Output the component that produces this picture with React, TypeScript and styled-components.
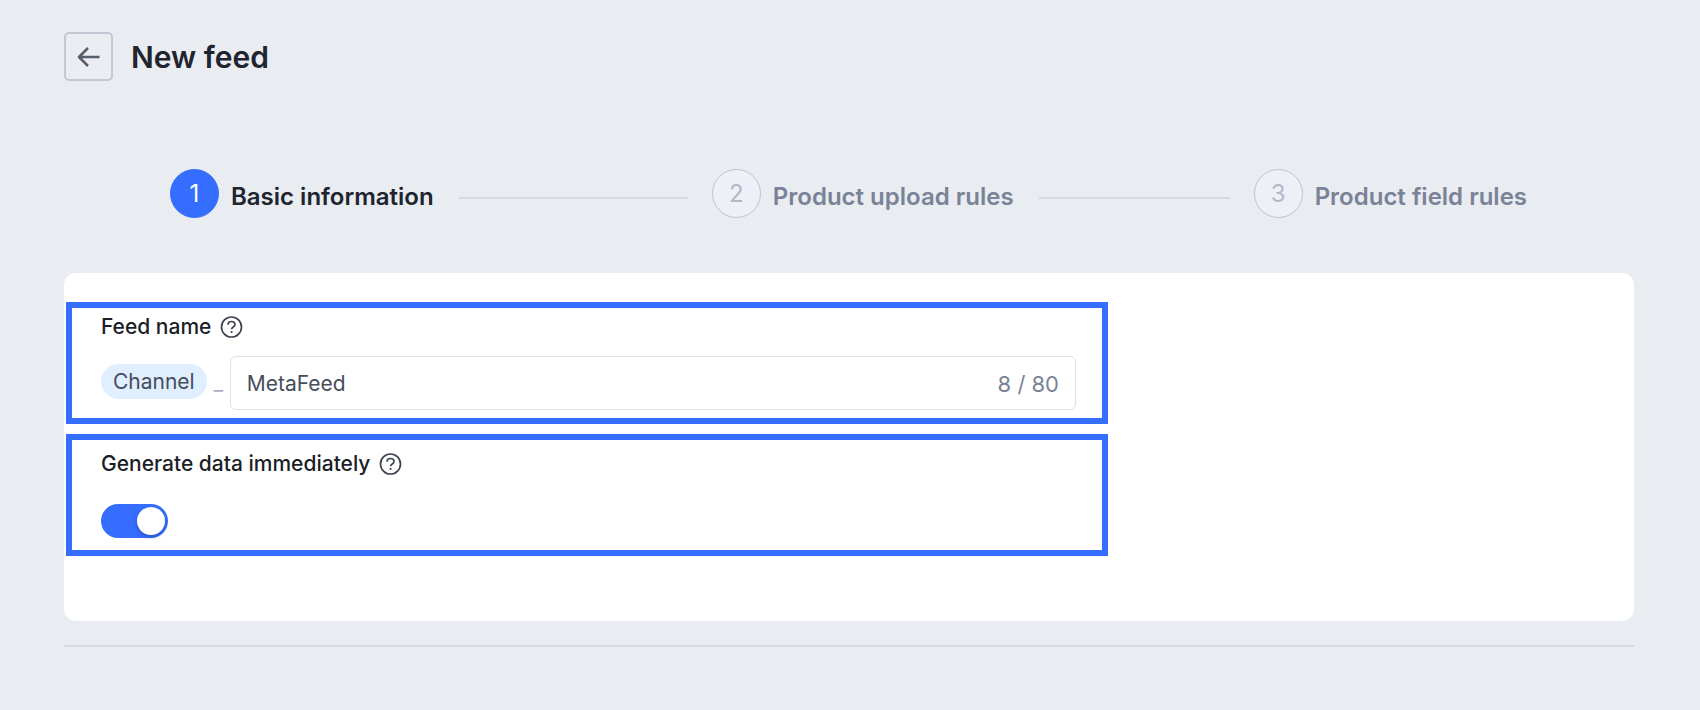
import React, { useState } from "react";
import styled, { createGlobalStyle } from "styled-components";

const GlobalStyle = createGlobalStyle`
  * { box-sizing: border-box; }
  body {
    margin: 0;
    background: #e9ecf1;
    color: #20242f;
    font-family: Inter, "Liberation Sans", sans-serif;
  }
  button, input { font: inherit; color: inherit; }
`;

const Page = styled.main`
  padding: 32px 66px 32px 64px;
`;

const Header = styled.header`
  display: flex;
  align-items: center;
  gap: 18px;
`;

const BackButton = styled.button`
  display: flex;
  align-items: center;
  justify-content: center;
  width: 49px;
  height: 49px;
  padding: 0;
  border: 2px solid #c5c8d4;
  border-radius: 5px;
  background: #ebedf2;
  color: #565d6b;
  cursor: pointer;
`;

const Title = styled.h1`
  margin: 0;
  font-size: 30px;
  line-height: 36px;
  font-weight: 600;
`;

const Steps = styled.ol`
  display: flex;
  margin: 88px 0 55px;
  padding: 0 107px 0 106px;
  list-style: none;
`;

const Step = styled.li`
  display: flex;
  flex: 1;
  align-items: center;
  &:last-child { flex: none; }
`;

const StepNumber = styled.span<{ $active?: boolean }>`
  display: flex;
  flex: none;
  align-items: center;
  justify-content: center;
  width: 49px;
  height: 49px;
  border: 1px solid ${(p) => (p.$active ? "#356eff" : "#bfc3cf")};
  border-radius: 50%;
  background: ${(p) => (p.$active ? "#356eff" : "#eef0f7")};
  color: ${(p) => (p.$active ? "#fff" : "#b3b8c8")};
  font-size: 24px;
  line-height: 28px;
`;

const StepLabel = styled.span<{ $active?: boolean }>`
  padding: 6px 0 0 12px;
  color: ${(p) => (p.$active ? "#20242f" : "#7a8297")};
  font-size: 24px;
  line-height: 28px;
  font-weight: 600;
  white-space: nowrap;
`;

const StepLine = styled.span`
  flex: 1;
  height: 2px;
  margin: 8px 24px 0 25px;
  background: #d5d9e4;
`;

const Card = styled.form`
  display: flex;
  flex-direction: column;
  gap: 10px;
  padding: 29px 2px 65px;
  border-radius: 12px;
  background: #fff;
`;

const Field = styled.div<{ $roomy?: boolean }>`
  width: 100%;
  max-width: 1042px;
  height: 122px;
  padding: ${(p) => (p.$roomy ? 11 : 6)}px 26px 0 29px;
  border: 6px solid #356eff;
`;

const LabelRow = styled.div`
  display: flex;
  align-items: center;
  gap: 9px;
  height: 26px;
`;

const Label = styled.label`
  color: #1b1e27;
  font-size: 21px;
  line-height: 26px;
  font-weight: 500;
`;

const HelpButton = styled.button`
  display: flex;
  padding: 0;
  border: 0;
  background: none;
  color: #3e4350;
`;

const NameRow = styled.div`
  display: flex;
  align-items: center;
  margin-top: 16px;
`;

const Chip = styled.span`
  margin-bottom: 3px;
  padding: 0 12px;
  border-radius: 18px;
  background: #e0efff;
  color: #464d5c;
  font-size: 21px;
  line-height: 35px;
`;

const Separator = styled.span`
  width: 23px;
  color: #a9aebb;
  font-size: 21px;
  line-height: 26px;
  text-align: center;
`;

const InputBox = styled.div`
  display: flex;
  flex: 1;
  align-items: center;
  height: 54px;
  padding: 2px 16px 0;
  border: 1px solid #dfe1e8;
  border-radius: 6px;
  background: #fff;
`;

const TextInput = styled.input`
  flex: 1;
  min-width: 0;
  padding: 0;
  border: 0;
  outline: 0;
  background: none;
  color: #464d5c;
  font-size: 21px;
  line-height: 26px;
`;

const Counter = styled.span`
  color: #7a8297;
  font-size: 22px;
  line-height: 26px;
`;

const Switch = styled.input`
  display: flex;
  align-items: center;
  appearance: none;
  width: 67px;
  height: 34px;
  margin: 27px 0 0;
  padding: 0 3px;
  border-radius: 17px;
  background: #b3b8c8;
  cursor: pointer;
  &::before {
    content: "";
    width: 28px;
    height: 28px;
    border-radius: 50%;
    background: #fff;
    box-shadow: 0 2px 4px rgba(0, 20, 90, 0.3);
  }
  &:checked {
    justify-content: flex-end;
    background: #356eff;
  }
`;

const Divider = styled.hr`
  height: 2px;
  margin: 24px 0 0;
  border: 0;
  background: #d5d9e1;
`;

const ArrowIcon = () => (
  <svg width="24" height="22" viewBox="0 0 24 22" fill="none" stroke="currentColor" strokeWidth="2.6" strokeLinejoin="round" aria-hidden="true">
    <path d="M22.5 11H2.5M11 2L2 11l9 9" />
  </svg>
);

const Help = ({ about }: { about: string }) => (
  <HelpButton type="button" aria-label={about}>
    <svg width="24" height="24" viewBox="0 0 24 24" fill="none" stroke="currentColor" strokeWidth="1.7" aria-hidden="true">
      <circle cx="11.5" cy="12" r="10" />
      <path d="M8 9.8C8 7.7 9.4 6.5 11.5 6.5S15 7.7 15 9.5c0 2.5-3.4 2.4-3.4 4.8" />
      <circle cx="11.6" cy="17" r="1.1" fill="currentColor" stroke="none" />
    </svg>
  </HelpButton>
);

const steps = ["Basic information", "Product upload rules", "Product field rules"];

export default function App() {
  const [name, setName] = useState("MetaFeed");
  const [generate, setGenerate] = useState(true);
  return (
    <>
      <GlobalStyle />
      <Page>
        <Header>
          <BackButton type="button" aria-label="Back">
            <ArrowIcon />
          </BackButton>
          <Title>New feed</Title>
        </Header>
        <Steps>
          {steps.map((label, i) => (
            <Step key={label} aria-current={i === 0 ? "step" : undefined}>
              <StepNumber $active={i === 0}>{i + 1}</StepNumber>
              <StepLabel $active={i === 0}>{label}</StepLabel>
              {i < steps.length - 1 && <StepLine />}
            </Step>
          ))}
        </Steps>
        <Card>
          <Field>
            <LabelRow>
              <Label htmlFor="feed-name">Feed name</Label>
              <Help about="About feed name" />
            </LabelRow>
            <NameRow>
              <Chip>Channel</Chip>
              <Separator>_</Separator>
              <InputBox>
                <TextInput id="feed-name" maxLength={80} value={name} onChange={(e) => setName(e.target.value)} />
                <Counter>{name.length} / 80</Counter>
              </InputBox>
            </NameRow>
          </Field>
          <Field $roomy>
            <LabelRow>
              <Label htmlFor="generate">Generate data immediately</Label>
              <Help about="About generating data" />
            </LabelRow>
            <Switch
              id="generate"
              type="checkbox"
              role="switch"
              checked={generate}
              onChange={(e) => setGenerate(e.target.checked)}
            />
          </Field>
        </Card>
        <Divider />
      </Page>
    </>
  );
}
